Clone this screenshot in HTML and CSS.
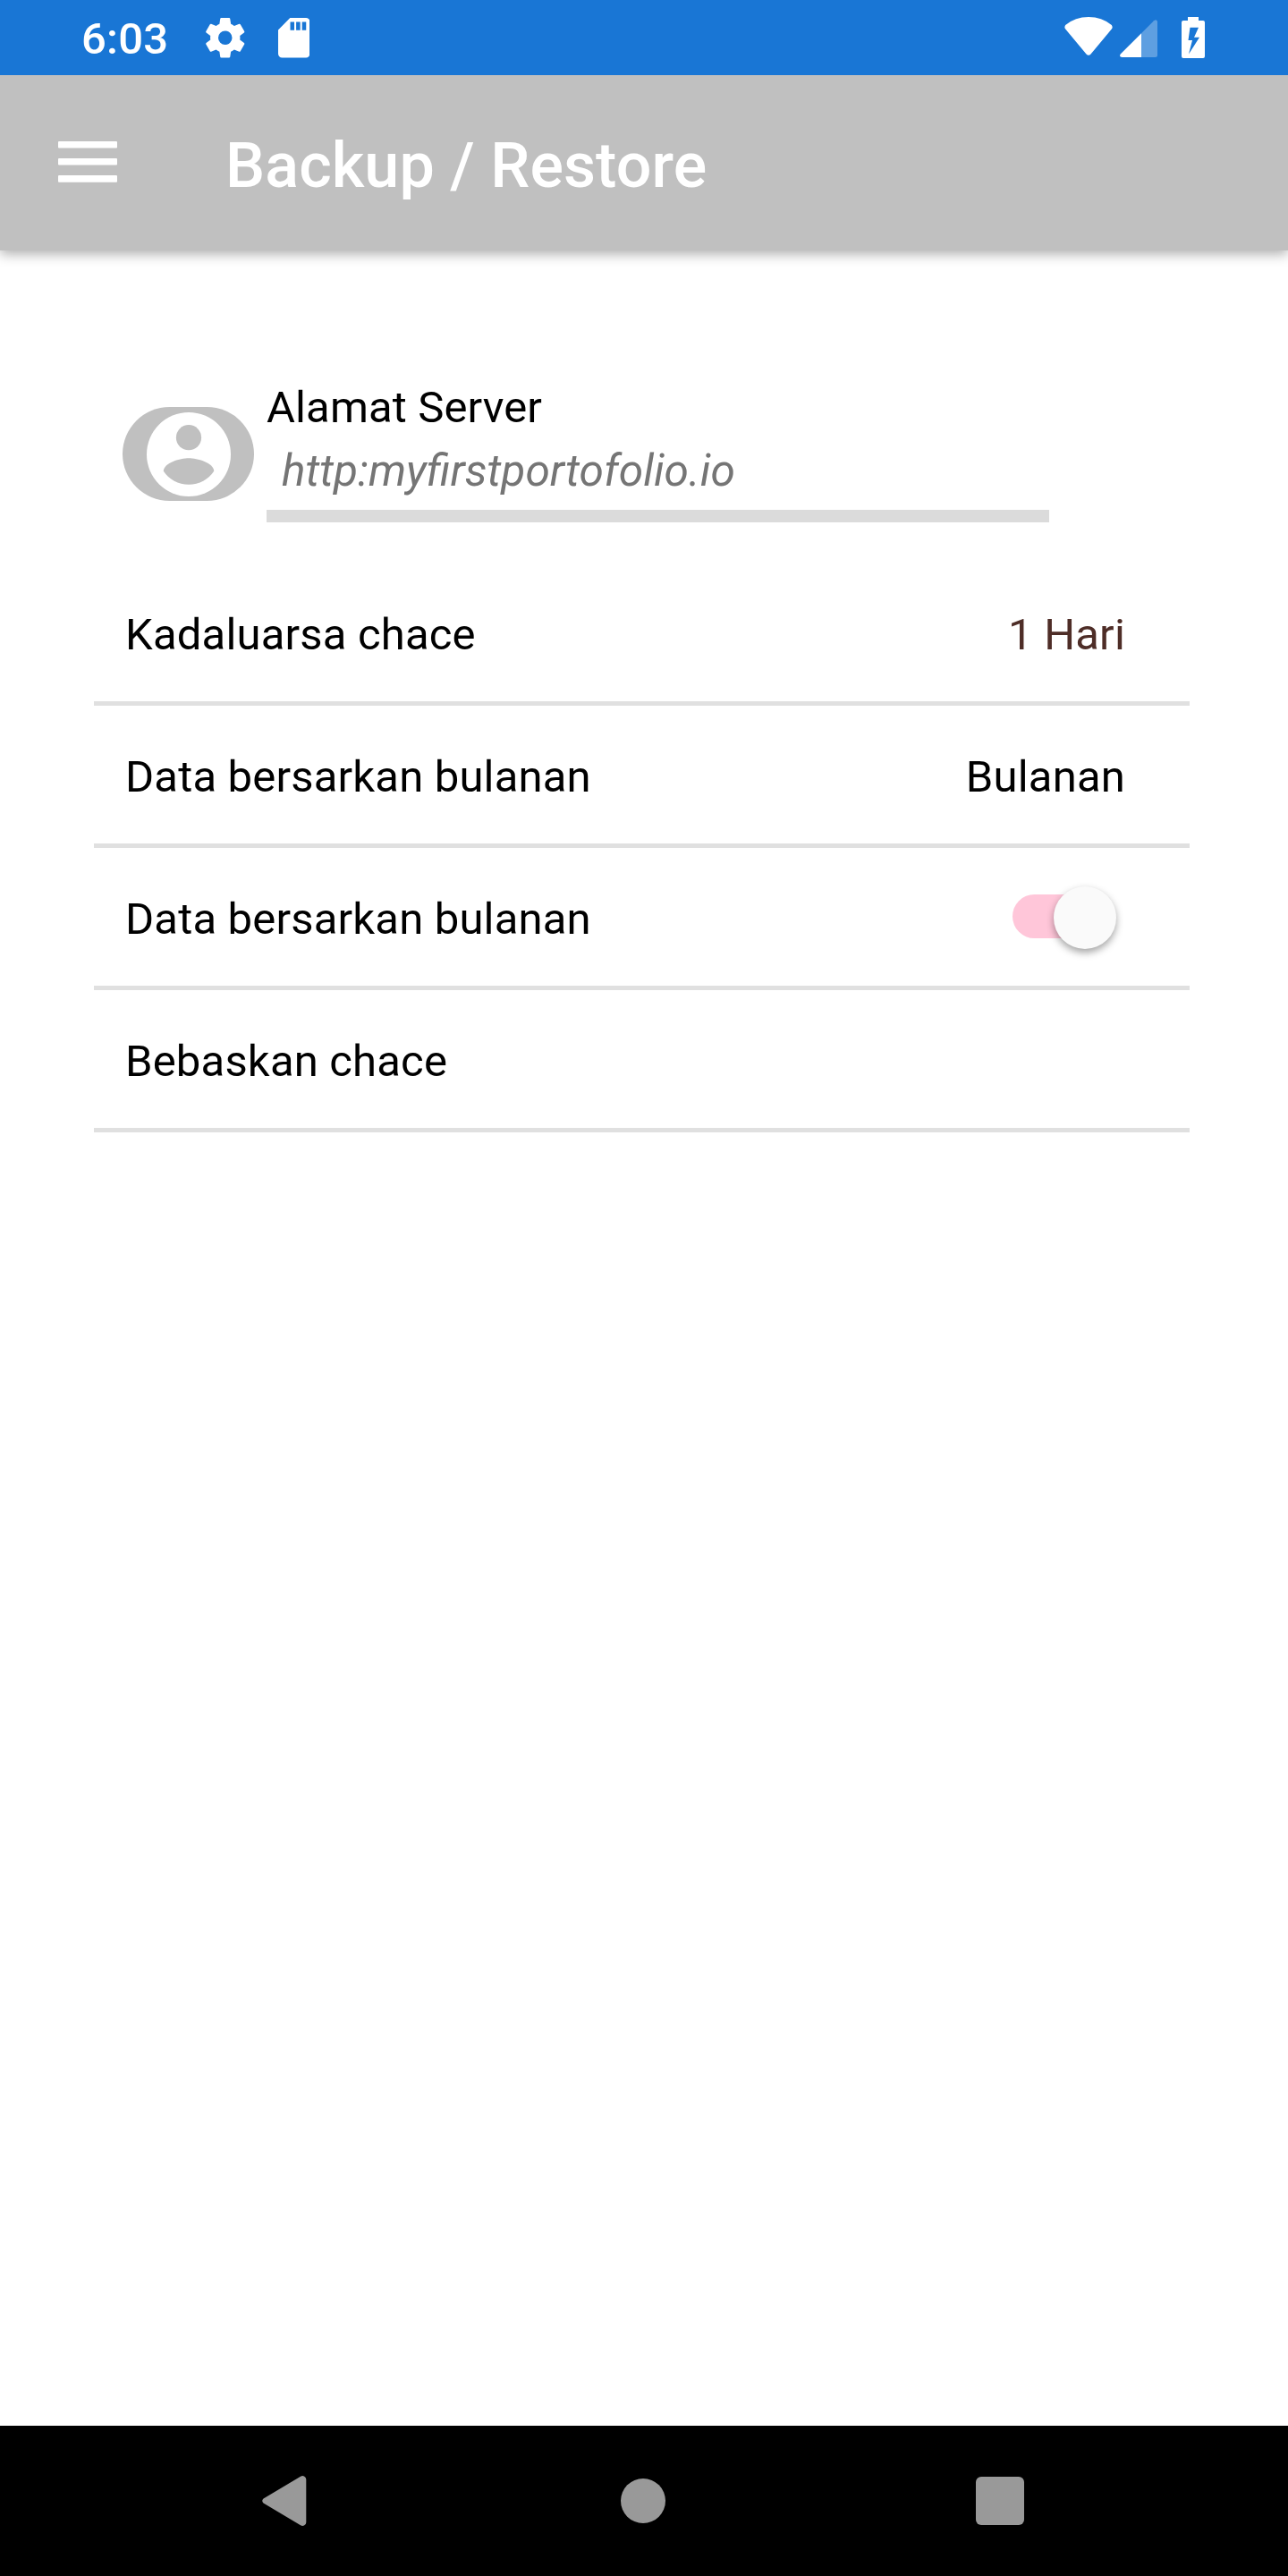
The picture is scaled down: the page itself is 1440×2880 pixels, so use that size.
FILE: index.html
```html
<!DOCTYPE html>
<html lang="id">
<head>
<meta charset="utf-8">
<title>Backup / Restore</title>
<link rel="stylesheet" href="styles.css">
</head>
<body>
<div class="screen">
  <header class="status">
    <span class="time">6:03</span>
    <svg class="gear" viewBox="2.2 2 19.6 20"><path fill="#fff" fill-rule="evenodd" d="M19.43 12.98c.04-.32.07-.64.07-.98s-.03-.66-.07-.98l2.11-1.65c.19-.15.24-.42.12-.64l-2-3.46c-.12-.22-.39-.3-.61-.22l-2.49 1c-.52-.4-1.08-.73-1.69-.98l-.38-2.65C14.46 2.18 14.25 2 14 2h-4c-.25 0-.46.18-.49.42l-.38 2.65c-.61.25-1.17.59-1.69.98l-2.49-1c-.23-.09-.49 0-.61.22l-2 3.46c-.13.22-.07.49.12.64l2.11 1.65c-.04.32-.07.65-.07.98s.03.66.07.98l-2.11 1.65c-.19.15-.24.42-.12.64l2 3.46c.12.22.39.3.61.22l2.49-1c.52.4 1.08.73 1.69.98l.38 2.65c.03.24.24.42.49.42h4c.25 0 .46-.18.49-.42l.38-2.65c.61-.25 1.17-.59 1.69-.98l2.49 1c.23.09.49 0 .61-.22l2-3.46c.12-.22.07-.49-.12-.64zM12 15.5a3.5 3.5 0 1 1 0-7 3.5 3.5 0 0 1 0 7z"/></svg>
    <svg class="sdcard" viewBox="0 0 36 45"><path fill="#fff" fill-rule="evenodd" d="M13.500 0H31.500a4.500 4.500 0 0 1 4.500 4.500V40.500a4.500 4.500 0 0 1-4.500 4.500H4.500A4.500 4.500 0 0 1 0 40.500V13.500zM13.700 4.500V14h4.600V4.500zM20.400 4.500V14h4.600V4.500zM27.100 4.500V14h4.600V4.500z"/></svg>
    <svg class="wifi" viewBox="0 0 54 43"><path fill="#fff" d="M1.200 9Q-.5 11.500 1.200 13.500L24.500 41.500Q27 44 29.500 41.500L52.800 13.500Q54.500 11.500 52.800 9Q42 0 27 0T1.200 9z"/></svg>
    <svg class="signal" viewBox="0 0 42 42"><path fill="#fff" fill-opacity=".3" d="M24 15.200L38 1.200Q41 -1 42 2V39.500Q42 42 39.500 42H24z"/><path fill="#fff" d="M24 15.200V42H2.500Q-1 41.500 .7 38.500z"/></svg>
    <svg class="battery" viewBox="0 0 26 46"><path fill="#fff" fill-rule="evenodd" d="M7 0H19V4H24Q26 4 26 6V44Q26 46 24 46H2Q0 46 0 44V6Q0 4 2 4H7zM9.500 11.800L7.500 26H12L8 41.500L20 22.700H14L19 11.800z"/></svg>
  </header>

  <div class="appbar">
    <svg class="menu" viewBox="0 0 66 46"><g fill="#fff"><rect width="66" height="7.500" rx="1"/><rect y="19" width="66" height="7.500" rx="1"/><rect y="38" width="66" height="7.800" rx="1"/></g></svg>
    <h1 class="title">Backup / Restore</h1>
  </div>

  <main class="content">
    <section class="server">
      <div class="avatar">
        <svg class="account" viewBox="2 2 20 20"><circle cx="12" cy="12" r="10" fill="#fff"/><circle cx="12" cy="8" r="3" fill="#c0c0c0"/><path fill="#c0c0c0" d="M12 19.200c-2.500 0-4.710-1.280-6-3.220.03-1.990 4-3.080 6-3.080 1.990 0 5.970 1.090 6 3.080-1.290 1.940-3.500 3.220-6 3.220z"/></svg>
      </div>
      <div class="address">
        <span class="label">Alamat Server</span>
        <span class="url">http:myfirstportofolio.io</span>
      </div>
    </section>

    <section class="settings">
      <div class="row"><span>Kadaluarsa chace</span><span class="expiry">1 Hari</span></div>
      <div class="row"><span>Data bersarkan bulanan</span><span>Bulanan</span></div>
      <div class="row"><span>Data bersarkan bulanan</span><span class="switch"><span class="thumb"></span></span></div>
      <div class="row"><span>Bebaskan chace</span></div>
    </section>
  </main>

  <nav class="navbar">
    <svg class="back" viewBox="0 0 50 56"><path fill="#999" d="M1.500 25.500L43 .7Q45 -.5 47 .4Q49.300 1.500 49.300 4V52Q49.300 54.500 47 55.600Q45 56.500 43 55.300L1.500 30.500Q-1 28 1.500 25.500z"/></svg>
    <span class="home"></span>
    <span class="recent"></span>
  </nav>
</div>
</body>
</html>
```
FILE: styles.css
```css
* { box-sizing: border-box; }
body { margin: 0; background: #fff; }
svg { display: block; flex: none; }

.screen {
  width: 1440px;
  height: 2880px;
  display: flex;
  flex-direction: column;
  font: 49px/58px Roboto, sans-serif;
  color: #000;
  background: #fff;
}

/* Status bar */
.status {
  height: 84px;
  flex: none;
  display: flex;
  align-items: flex-start;
  padding: 15px 93px 0 91px;
  background: #1976d5;
}
.time { width: 139px; color: #fff; font-weight: 500; letter-spacing: .2px; }
.gear { width: 43.500px; height: 44.500px; margin-top: 5px; }
.sdcard { width: 35.500px; height: 44.500px; margin: 5px auto 0 37px; }
.wifi { width: 54px; height: 43px; margin-top: 4px; }
.signal { width: 42px; height: 42px; margin: 7px 27px 0 8px; }
.battery { width: 26px; height: 46px; margin-top: 4px; }

/* App bar */
.appbar {
  height: 196px;
  flex: none;
  display: flex;
  align-items: center;
  padding-left: 65px;
  background: #c0c0c0;
  box-shadow: 0 4px 13px rgba(0, 0, 0, .32);
  clip-path: inset(0 0 -30px 0);
}
.menu { width: 66px; height: 46px; margin-top: -3px; }
.title {
  margin: 5px 0 0 121px;
  font-size: 70px;
  line-height: 82px;
  font-weight: 500;
  letter-spacing: .1px;
  color: #fff;
}

/* Server address */
.content { flex: 1; padding: 146px 110px 0 105px; }
.server { display: flex; padding-left: 32px; height: 204px; }
.avatar {
  width: 147px;
  height: 105px;
  margin: 29px 14px 0 0;
  border-radius: 53px;
  display: flex;
  align-items: center;
  justify-content: center;
  background: #c0c0c0;
}
.account { width: 94px; height: 94px; }
.address {
  width: 875px;
  height: 158px;
  padding-top: 1px;
  display: flex;
  flex-direction: column;
  gap: 12px;
  border-bottom: 14px solid #dbdbdb;
}
.label { letter-spacing: .12px; }
.url { padding-left: 17px; font-size: 49.600px; font-style: italic; color: #757575; }

/* Settings list */
.row {
  height: 159px;
  display: flex;
  align-items: center;
  justify-content: space-between;
  padding: 5px 72px 0 35px;
  letter-spacing: .18px;
  border-bottom: 5px solid #e0e0e0;
}
.expiry { color: #4e2d27; }
.switch {
  width: 110px;
  height: 49px;
  margin: -7px 16px 0 0;
  border-radius: 25px;
  display: flex;
  align-items: center;
  justify-content: flex-end;
  background: #ffc6d9;
}
.thumb {
  flex: none;
  width: 70px;
  height: 70px;
  margin: 3px -6px 0 0;
  border-radius: 50%;
  background: #fafafa;
  box-shadow: 0 4px 8px rgba(0, 0, 0, .36);
}

/* System navigation */
.navbar {
  height: 168px;
  flex: none;
  display: flex;
  align-items: center;
  padding: 0 295px 0 293px;
  justify-content: space-between;
  background: #000;
}
.back { width: 50px; height: 56px; }
.home { width: 50px; height: 50px; margin-left: 4px; border-radius: 50%; background: #999; }
.recent { width: 54px; height: 54px; border-radius: 6px; background: #999; }
```
